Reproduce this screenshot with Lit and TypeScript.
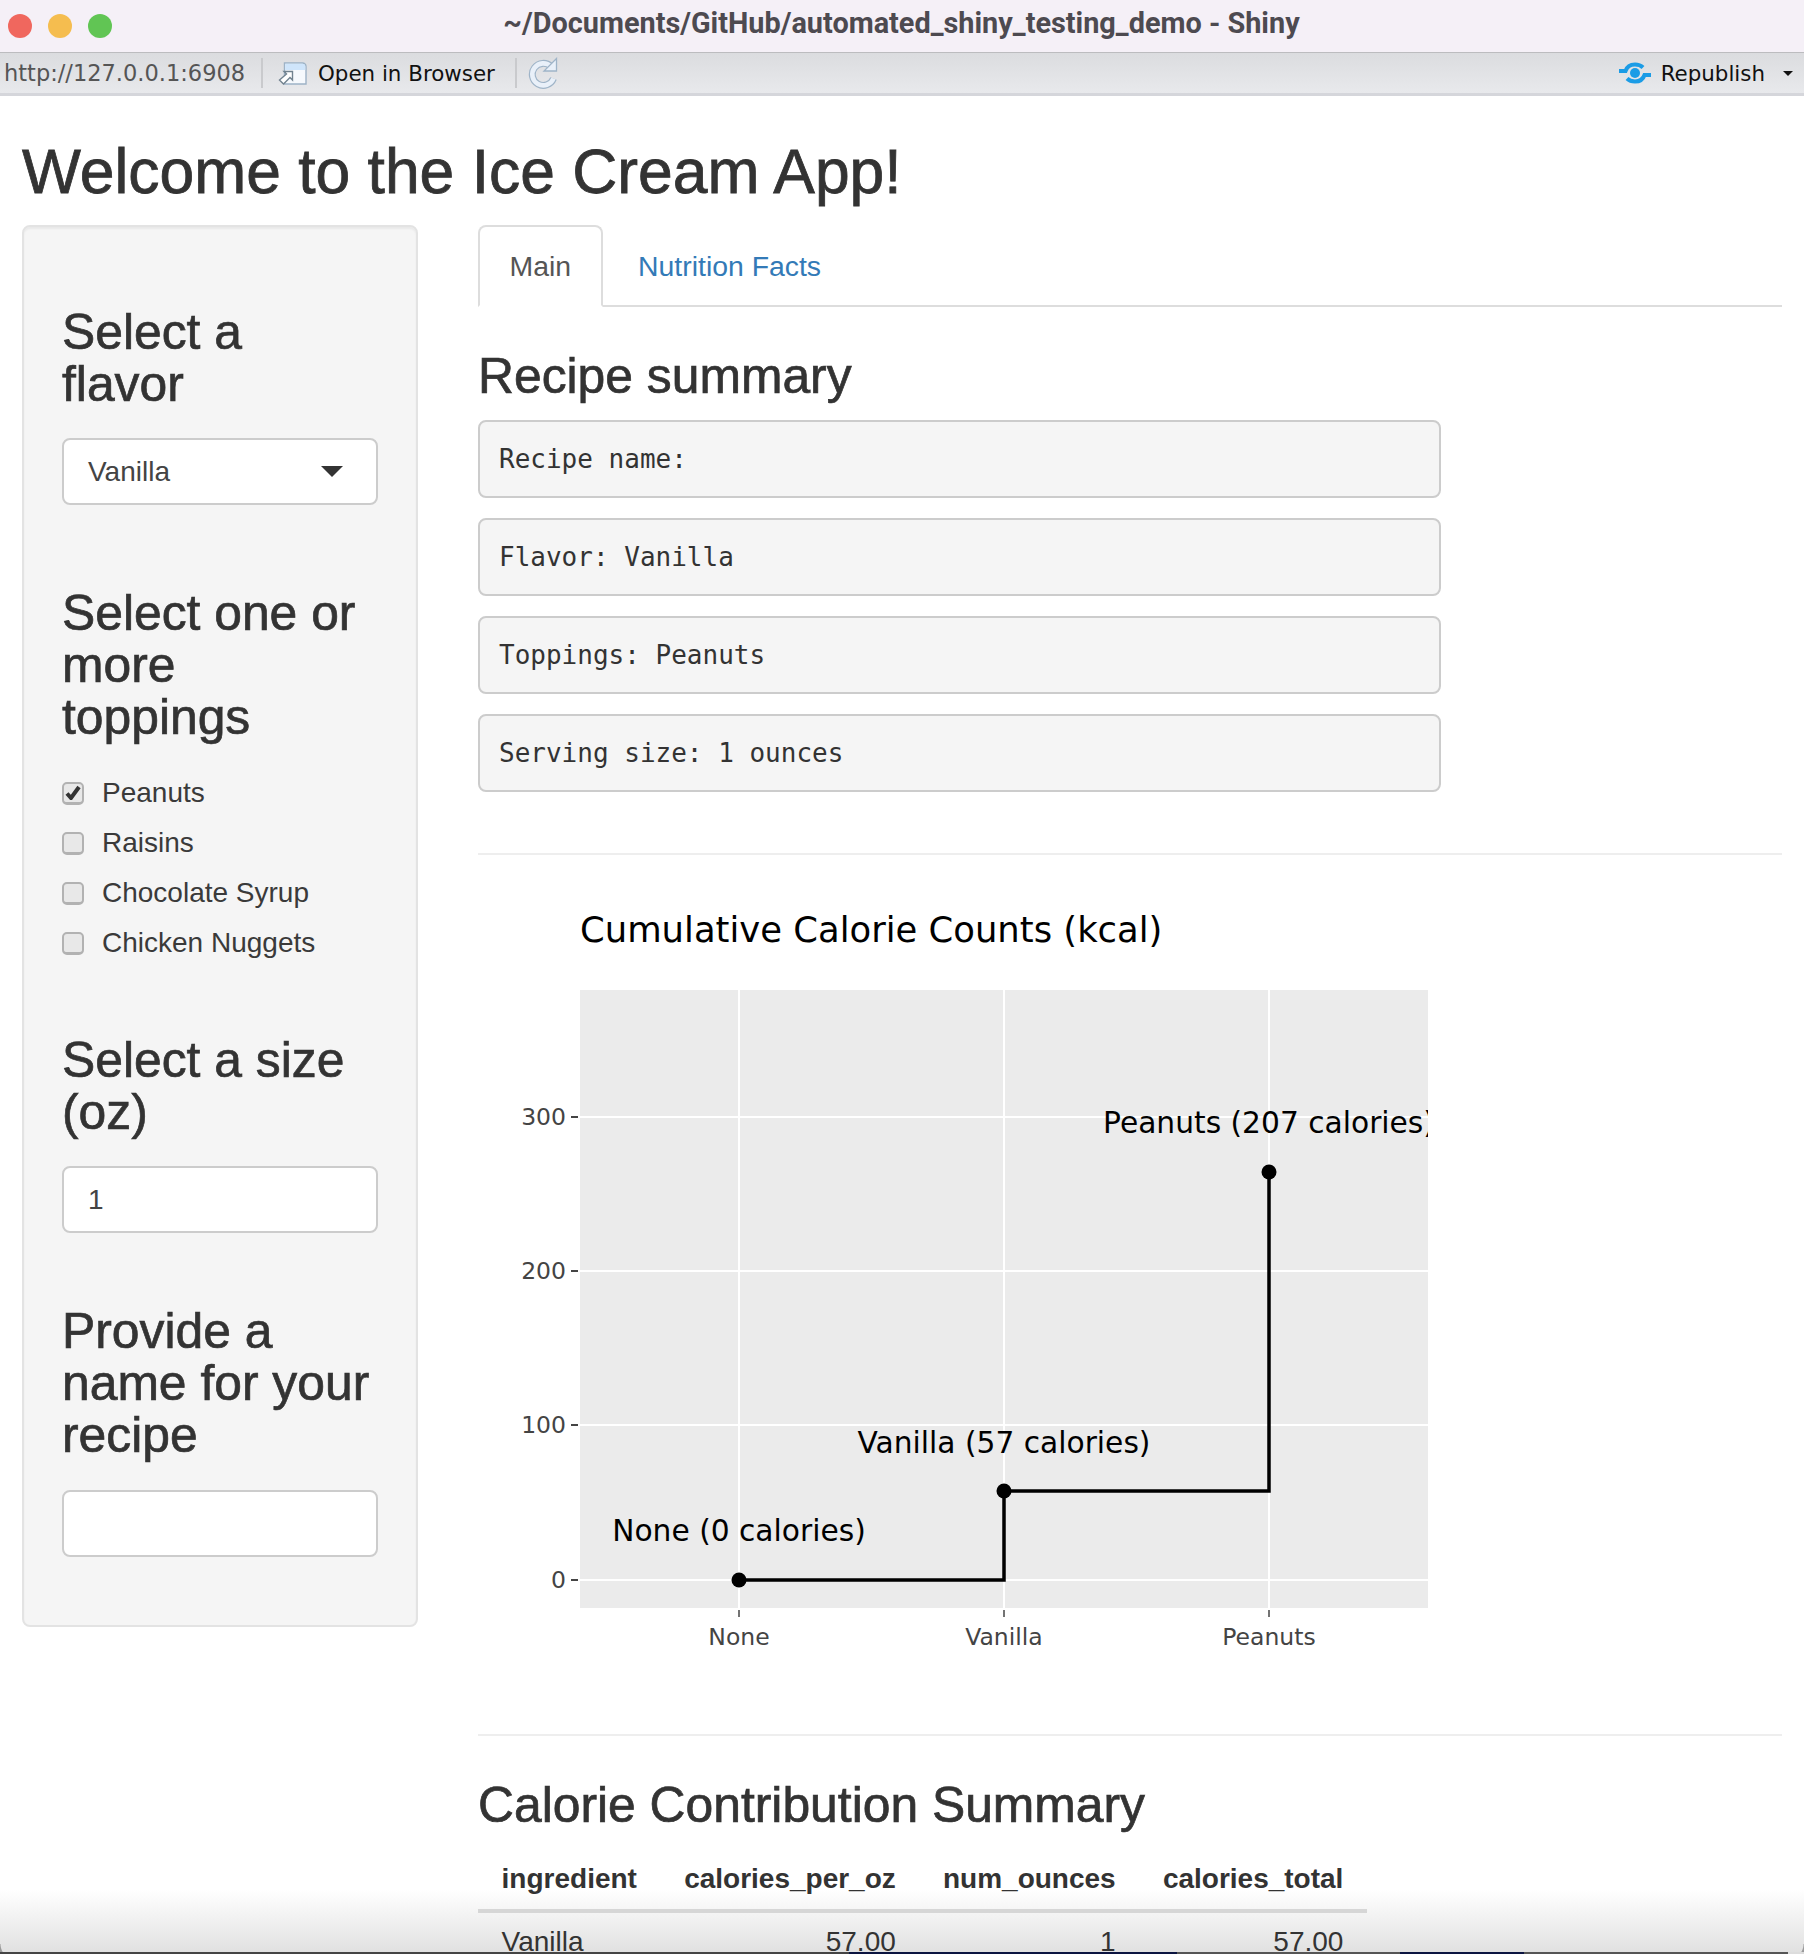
import {LitElement, css, html, svg} from 'lit';
import {customElement} from 'lit/decorators.js';

const toppings = [
  {name: 'Peanuts', on: true},
  {name: 'Raisins', on: false},
  {name: 'Chocolate Syrup', on: false},
  {name: 'Chicken Nuggets', on: false},
];

const summary = ['Recipe name:', 'Flavor: Vanilla', 'Toppings: Peanuts', 'Serving size: 1 ounces'];

// chart positions, page pixels minus the svg origin (478, 880)
const ox = 478;
const oy = 880;
const xTicks = [{x: 739, label: 'None'}, {x: 1004, label: 'Vanilla'}, {x: 1269, label: 'Peanuts'}];
const yTicks = [{y: 1117, label: '300'}, {y: 1271, label: '200'}, {y: 1425, label: '100'}, {y: 1580, label: '0'}];
const points = [
  {x: 739, y: 1580, label: 'None (0 calories)', ly: 1541},
  {x: 1004, y: 1491, label: 'Vanilla (57 calories)', ly: 1453},
  {x: 1269, y: 1172, label: 'Peanuts (207 calories)', ly: 1133},
];

@customElement('app-root')
export class AppRoot extends LitElement {
  static styles = css`
    :host {
      display: block;
      position: relative;
      height: 1954px;
      overflow: hidden;
      background: #fff;
      color: #333;
      font-family: "Liberation Sans", Arial, sans-serif;
    }
    .titlebar {
      height: 52px;
      background: #f5f0f7;
      display: flex;
      align-items: center;
      position: relative;
      box-sizing: border-box;
    }
    .lights {
      display: flex;
      gap: 16px;
      padding-left: 8px;
    }
    .lights span {
      width: 24px;
      height: 24px;
      border-radius: 50%;
    }
    .red { background: #f0675e; }
    .yellow { background: #f5bd4f; }
    .green { background: #61c554; }
    .window-title {
      position: absolute;
      left: 0;
      right: 0;
      top: 0;
      line-height: 46px;
      padding-right: 1px;
      text-align: center;
      font-family: Roboto, sans-serif;
      font-weight: 700;
      font-size: 28.850px;
      color: #4d4a50;
    }
    .toolbar {
      height: 44px;
      box-sizing: border-box;
      border-top: 1px solid #bcbcbf;
      border-bottom: 3px solid #d5d6db;
      background: linear-gradient(#dbdcdf, #e8e9ec);
      display: flex;
      align-items: center;
      font-family: "DejaVu Sans", sans-serif;
      font-size: 21.4px;
      color: #111;
    }
    .url {
      color: #555;
      padding-left: 4px;
      width: 261px;
      box-sizing: border-box;
      font-size: 22.500px;
    }
    .sep {
      width: 2px;
      height: 30px;
      background: #c9cacd;
    }
    .open {
      display: flex;
      align-items: center;
      gap: 11px;
      padding-left: 14px;
      width: 252px;
      box-sizing: border-box;
    }
    .refresh {
      margin-left: 11px;
    }
    .republish {
      margin-left: auto;
      display: flex;
      align-items: center;
      gap: 8px;
      padding-right: 11px;
    }
    .caret {
      width: 0;
      height: 0;
      border-left: 5px solid transparent;
      border-right: 5px solid transparent;
      border-top: 5px solid #111;
      margin-left: 10px;
    }
    h1 {
      margin: 0;
      padding: 40px 0 0 22px;
      font-weight: 400;
      font-size: 62.400px;
      line-height: 72px;
      -webkit-text-stroke: 0.8px #333;
    }
    .page {
      display: flex;
      align-items: flex-start;
      padding: 17px 22px 0 22px;
      position: relative;
      z-index: 1;
    }
    .well {
      width: 396px;
      flex: none;
      box-sizing: border-box;
      height: 1402px;
      padding: 79px 38px 0 38px;
      background: #f5f5f5;
      border: 2px solid #e3e3e3;
      border-radius: 8px;
      box-shadow: inset 0 2px 2px rgba(0, 0, 0, 0.05);
      margin-right: 60px;
    }
    h3 {
      margin: 0;
      font-weight: 400;
      font-size: 49.800px;
      line-height: 52px;
      -webkit-text-stroke: 0.7px #333;
    }
    .group { margin-bottom: 82px; }
    .group.checks { margin-bottom: 71px; }
    .group.size { margin-bottom: 72px; }
    .control {
      display: flex;
      align-items: center;
      justify-content: space-between;
      box-sizing: border-box;
      height: 67px;
      margin-top: 28px;
      padding: 0 24px;
      background: #fff;
      border: 2px solid #ccc;
      border-radius: 8px;
      font-size: 28px;
      color: #444;
    }
    .control.name { margin-top: 29px; }
    .arrow {
      width: 0;
      height: 0;
      border-left: 11px solid transparent;
      border-right: 11px solid transparent;
      border-top: 11px solid #333;
      margin-right: 9px;
    }
    .checklist {
      margin-top: 30px;
      display: flex;
      flex-direction: column;
      gap: 10px;
    }
    .check {
      display: flex;
      align-items: center;
      gap: 18px;
      height: 40px;
      font-size: 28px;
      color: #3a3a3a;
    }
    .box {
      width: 22px;
      height: 23px;
      box-sizing: border-box;
      border: 2px solid #b2b2b2;
      border-bottom-width: 3px;
      border-radius: 5px;
      background: #e8e8e8;
      display: flex;
      align-items: center;
      justify-content: center;
    }
    .main {
      flex: 1;
      min-width: 0;
    }
    .tabs {
      display: flex;
      height: 82px;
      box-sizing: border-box;
      border-bottom: 2px solid #ddd;
      font-size: 28.400px;
    }
    .tab {
      box-sizing: border-box;
      height: 82px;
      padding: 0 29.500px;
      line-height: 78px;
      color: #337ab7;
      border: 2px solid transparent;
    }
    .tab.active {
      color: #555;
      background: #fff;
      border-color: #ddd;
      border-bottom-color: #fff;
      border-radius: 8px 8px 0 0;
      margin-right: 4px;
    }
    .summary-head {
      margin-top: 43px;
      margin-bottom: 18px;
    }
    pre {
      margin: 0 0 20px 0;
      width: 963px;
      height: 78px;
      box-sizing: border-box;
      padding: 0 19px;
      line-height: 74px;
      background: #f5f5f5;
      border: 2px solid #ccc;
      border-radius: 8px;
      font-family: "DejaVu Sans Mono", monospace;
      font-size: 26px;
      color: #333;
    }
    hr {
      margin: 0;
      border: 0;
      border-top: 2px solid #eee;
    }
    .first-hr { margin-top: 61px; }
    .chart {
      display: block;
      margin-top: 25px;
    }
    .chart text { font-family: "DejaVu Sans", sans-serif; }
    .chart .title { font-size: 35.400px; fill: #000; }
    .chart .tick { font-size: 23.500px; fill: #444; }
    .chart .note { font-size: 29.700px; fill: #000; }
    .calorie-head { margin-top: 43px; }
    table {
      margin-top: 17px;
      border-collapse: collapse;
      font-size: 28px;
      color: #333;
    }
    th, td {
      padding: 0 23.600px;
      white-space: nowrap;
    }
    th {
      height: 61px;
      border-bottom: 4px solid #d6d6d6;
      font-weight: 700;
      text-align: left;
    }
    td {
      padding-top: 9px;
      line-height: 40px;
    }
    .num { text-align: right; }
    .fade {
      position: absolute;
      left: 0;
      right: 0;
      bottom: 0;
      height: 64px;
      background: linear-gradient(#fff, #e0e0e0);
    }
    .edge {
      position: absolute;
      left: 0;
      right: 0;
      bottom: 0;
      height: 2px;
      z-index: 2;
      background: linear-gradient(
        90deg,
        #444 0 849px,
        #0b1440 849px 1177px,
        #555 1177px 1400px,
        #0b1440 1400px 1524px,
        #555 1524px 1788px,
        #ddd 1788px
      );
    }
    .corner {
      position: absolute;
      bottom: 2px;
      width: 16px;
      height: 8px;
      z-index: 2;
    }
    .corner.left {
      left: 0;
      background: radial-gradient(circle at 100% 0, transparent 15px, #9a9a9a 16px);
    }
    .corner.right {
      right: 0;
      background: radial-gradient(circle at 0 0, transparent 15px, #9a9a9a 16px);
    }
  `;

  private chart() {
    return html`
      <svg class="chart" width="1304" height="854" viewBox="0 0 1304 854">
        <defs>
          <clipPath id="plot"><rect x=${580 - ox} y=${990 - oy} width="848" height="618"></rect></clipPath>
        </defs>
        <text class="title" x=${580 - ox} y=${942 - oy}>Cumulative Calorie Counts (kcal)</text>
        <rect x=${580 - ox} y=${990 - oy} width="848" height="618" fill="#ebebeb"></rect>
        ${xTicks.map((t) => svg`
          <line x1=${t.x - ox} x2=${t.x - ox} y1=${990 - oy} y2=${1608 - oy} stroke="#fff" stroke-width="2"></line>
          <line x1=${t.x - ox} x2=${t.x - ox} y1=${1610 - oy} y2=${1617 - oy} stroke="#444" stroke-width="1.5"></line>
          <text class="tick" x=${t.x - ox} y=${1645 - oy} text-anchor="middle">${t.label}</text>
        `)}
        ${yTicks.map((t) => svg`
          <line x1=${580 - ox} x2=${1428 - ox} y1=${t.y - oy} y2=${t.y - oy} stroke="#fff" stroke-width="2"></line>
          <line x1=${571 - ox} x2=${578 - ox} y1=${t.y - oy} y2=${t.y - oy} stroke="#444" stroke-width="2"></line>
          <text class="tick" x=${566 - ox} y=${t.y + 8 - oy} text-anchor="end">${t.label}</text>
        `)}
        <path
          d="M${739 - ox} ${1580 - oy} H${1004 - ox} V${1491 - oy} H${1269 - ox} V${1172 - oy}"
          fill="none"
          stroke="#000"
          stroke-width="3.5"
        ></path>
        ${points.map((p) => svg`
          <circle cx=${p.x - ox} cy=${p.y - oy} r="7.5" fill="#000"></circle>
          <text class="note" clip-path="url(#plot)" x=${p.x - ox} y=${p.ly - oy} text-anchor="middle">${p.label}</text>
        `)}
      </svg>
    `;
  }

  render() {
    return html`
      <div class="fade"></div>
      <div class="titlebar">
        <div class="lights"><span class="red"></span><span class="yellow"></span><span class="green"></span></div>
        <div class="window-title">~/Documents/GitHub/automated_shiny_testing_demo - Shiny</div>
      </div>
      <div class="toolbar">
        <span class="url">http://127.0.0.1:6908</span>
        <span class="sep"></span>
        <span class="open">
          <svg width="30" height="23" viewBox="0 0 30 23">
            <path d="M7.500 1h18a3.500 3.500 0 0 1 3.500 3.500V22H7.500z" fill="#f6f9fd" stroke="#9db2c6" stroke-width="1.4"></path>
            <path d="M8.200 1.700h17.300a2.800 2.800 0 0 1 2.800 2.800v3.500H8.200z" fill="#cfe5fb"></path>
            <path d="M7 9.500H15.500V18L13 15.500L6.500 22L2.500 18L9.500 12z" fill="#fff" stroke="#71828f" stroke-width="1.4"></path>
          </svg>
          Open in Browser
        </span>
        <span class="sep"></span>
        <svg class="refresh" width="30" height="33" viewBox="0 0 30 33">
          <path d="M23 9.500A11 11 0 1 0 25.500 21.500" fill="none" stroke="#9fb4c8" stroke-width="7"></path>
          <path d="M23 9.500A11 11 0 1 0 25.500 21.500" fill="none" stroke="#e9f0f9" stroke-width="4.600"></path>
          <path d="M28.500 1.500V14H16z" fill="#e9f0f9" stroke="#9fb4c8" stroke-width="1.300"></path>
        </svg>
        <span class="republish">
          <svg width="36" height="30" viewBox="0 0 36 30">
            <circle cx="18" cy="15" r="5" fill="#1b9ce6"></circle>
            <path d="M2 13h6.500C10 8.500 14 6.500 18 6.500c3 0 6 1 8 3" fill="none" stroke="#1b9ce6" stroke-width="4"></path>
            <path d="M34 17h-6.500C26 21.500 22 23.500 18 23.500c-3 0-6-1-8-3" fill="none" stroke="#1b9ce6" stroke-width="4"></path>
          </svg>
          Republish
          <span class="caret"></span>
        </span>
      </div>
      <h1>Welcome to the Ice Cream App!</h1>
      <div class="page">
        <aside class="well">
          <div class="group">
            <h3>Select a<br />flavor</h3>
            <div class="control">Vanilla<span class="arrow"></span></div>
          </div>
          <div class="group checks">
            <h3>Select one or<br />more<br />toppings</h3>
            <div class="checklist">
              ${toppings.map((t) => html`
                <label class="check">
                  <span class="box">
                    ${t.on
                      ? html`<svg width="16" height="15" viewBox="0 0 16 15"><path d="M2 8.500l4 4.500 8-11" fill="none" stroke="#333" stroke-width="4"></path></svg>`
                      : ''}
                  </span>
                  ${t.name}
                </label>
              `)}
            </div>
          </div>
          <div class="group size">
            <h3>Select a size<br />(oz)</h3>
            <div class="control">1</div>
          </div>
          <div class="group">
            <h3>Provide a<br />name for your<br />recipe</h3>
            <div class="control name"></div>
          </div>
        </aside>
        <main class="main">
          <div class="tabs">
            <div class="tab active">Main</div>
            <div class="tab">Nutrition Facts</div>
          </div>
          <h3 class="summary-head">Recipe summary</h3>
          ${summary.map((s) => html`<pre>${s}</pre>`)}
          <hr class="first-hr" />
          ${this.chart()}
          <hr />
          <h3 class="calorie-head">Calorie Contribution Summary</h3>
          <table>
            <thead>
              <tr><th>ingredient</th><th>calories_per_oz</th><th>num_ounces</th><th>calories_total</th></tr>
            </thead>
            <tbody>
              <tr><td>Vanilla</td><td class="num">57.00</td><td class="num">1</td><td class="num">57.00</td></tr>
            </tbody>
          </table>
        </main>
      </div>
      <div class="corner left"></div>
      <div class="corner right"></div>
      <div class="edge"></div>
    `;
  }
}
